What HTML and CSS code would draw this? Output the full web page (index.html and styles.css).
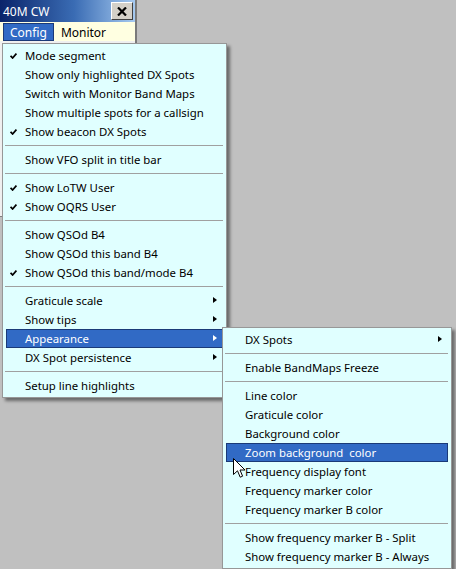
FILE: index.html
```html
<!DOCTYPE html>
<html>
<head>
<meta charset="utf-8">
<title>40M CW</title>
<link rel="stylesheet" href="styles.css">
</head>
<body>
<div class="screen">
  <div class="window">
    <div class="titlebar">
      <span class="title">40M CW</span>
      <span class="close"><svg width="10" height="9" viewBox="0 0 10 9"><path d="M1 0.5 L9 8.5 M9 0.5 L1 8.5" stroke="#000" stroke-width="2.2" fill="none"/></svg></span>
    </div>
    <div class="menubar">
      <span class="mb-item active">Config</span>
      <span class="mb-item">Monitor</span>
    </div>
    <div class="client"></div>
  </div>

  <div class="menu main-menu">
    <div class="item checked"><span class="check"></span>Mode segment</div>
    <div class="item">Show only highlighted DX Spots</div>
    <div class="item">Switch with Monitor Band Maps</div>
    <div class="item">Show multiple spots for a callsign</div>
    <div class="item checked"><span class="check"></span>Show beacon DX Spots</div>
    <div class="sep"></div>
    <div class="item">Show VFO split in title bar</div>
    <div class="sep"></div>
    <div class="item checked"><span class="check"></span>Show LoTW User</div>
    <div class="item checked"><span class="check"></span>Show OQRS User</div>
    <div class="sep"></div>
    <div class="item">Show QSOd B4</div>
    <div class="item">Show QSOd this band B4</div>
    <div class="item checked"><span class="check"></span>Show QSOd this band/mode B4</div>
    <div class="sep"></div>
    <div class="item sub">Graticule scale<span class="arrow"></span></div>
    <div class="item sub">Show tips<span class="arrow"></span></div>
    <div class="item sub hl">Appearance<span class="arrow"></span></div>
    <div class="item sub">DX Spot persistence<span class="arrow"></span></div>
    <div class="sep"></div>
    <div class="item">Setup line highlights</div>
  </div>

  <div class="menu sub-menu">
    <div class="item sub">DX Spots<span class="arrow"></span></div>
    <div class="sep"></div>
    <div class="item">Enable BandMaps Freeze</div>
    <div class="sep"></div>
    <div class="item">Line color</div>
    <div class="item">Graticule color</div>
    <div class="item">Background color</div>
    <div class="item hl">Zoom background&nbsp; color</div>
    <div class="item">Frequency display font</div>
    <div class="item">Frequency marker color</div>
    <div class="item">Frequency marker B color</div>
    <div class="sep"></div>
    <div class="item">Show frequency marker B - Split</div>
    <div class="item">Show frequency marker B - Always</div>
  </div>

  <svg class="cursor" width="13" height="21" viewBox="0 0 13 21"><path d="M0.5 0.5 L0.5 16.5 L4.5 12.8 L7.2 19.2 L9.6 18.2 L7 12 L12 12 Z" fill="#fff" stroke="#000" stroke-width="1" stroke-linejoin="miter"/></svg>
</div>
</body>
</html>
```
FILE: styles.css
```css
html, body {
  margin: 0;
  padding: 0;
  background: #c0c0c0;
}
.screen {
  position: relative;
  width: 456px;
  height: 569px;
  overflow: hidden;
  font-family: "Noto Sans", "Open Sans", sans-serif;
  font-size: 11.4px;
  color: #000;
}
.window {
  width: 137px;
  box-sizing: border-box;
  border-right: 2px solid #7a7a7a;
  display: flex;
  flex-direction: column;
}
.titlebar {
  height: 22px;
  display: flex;
  align-items: center;
  background: linear-gradient(to right, #0a246a 0%, #3a6cb4 55%, #a6caf0 100%);
}
.title {
  color: #fff;
  padding-left: 3px;
  font-size: 12px;
}
.close {
  margin-left: auto;
  margin-right: 2px;
  width: 22px;
  height: 18px;
  box-sizing: border-box;
  background: #d4d0c8;
  border: 1px solid;
  border-color: #ffffff #404040 #404040 #ffffff;
  display: flex;
  align-items: center;
  justify-content: center;
}
.menubar {
  height: 19px;
  display: flex;
  align-items: stretch;
  background: #ffffe1;
  padding: 1px 0 0 3px;
  box-sizing: border-box;
  font-size: 12px;
}
.mb-item {
  display: flex;
  align-items: center;
  padding: 0 6px;
  border: 1px solid transparent;
}
.mb-item.active {
  background: #316ac5;
  border-color: #1a3a78;
  color: #fff;
}
.client {
  height: 175px;
  background: #f0f0f0;
  border-bottom: 1px solid #808080;
}
.menu {
  position: absolute;
  box-sizing: border-box;
  background: #e0ffff;
  border: 1px solid #979797;
  padding: 2px 3px;
  box-shadow: 3px 3px 3px rgba(0, 0, 0, 0.45);
}
.main-menu {
  left: 2px;
  top: 43px;
  width: 225px;
}
.sub-menu {
  left: 222px;
  top: 327px;
  width: 230px;
}
.item {
  position: relative;
  height: 19px;
  box-sizing: border-box;
  border: 1px solid transparent;
  padding-left: 18px;
  display: flex;
  align-items: center;
  white-space: nowrap;
}
.item.hl {
  background: #316ac5;
  border-color: #1a3a78;
  color: #fff;
}
.check {
  position: absolute;
  left: 3px;
  top: 6px;
  width: 7px;
  height: 6px;
  background: no-repeat center / 7px 6px;
  background-image: url("data:image/svg+xml;utf8,<svg xmlns='http://www.w3.org/2000/svg' width='7' height='6' viewBox='0 0 7 6'><path d='M0.6 2.8 L2.6 5 L6.4 0.6' stroke='black' stroke-width='1.7' fill='none'/></svg>");
}
.arrow {
  position: absolute;
  right: 5px;
  top: 5px;
  width: 0;
  height: 0;
  border-top: 3.5px solid transparent;
  border-bottom: 3.5px solid transparent;
  border-left: 4px solid #000;
}
.item.hl .arrow {
  border-left-color: #fff;
}
.sep {
  height: 9px;
  position: relative;
}
.sep::after {
  content: "";
  position: absolute;
  left: -1px;
  right: 0;
  top: 4px;
  height: 1px;
  background: #a0a0a0;
}
.cursor {
  position: absolute;
  left: 233px;
  top: 458px;
}
```
